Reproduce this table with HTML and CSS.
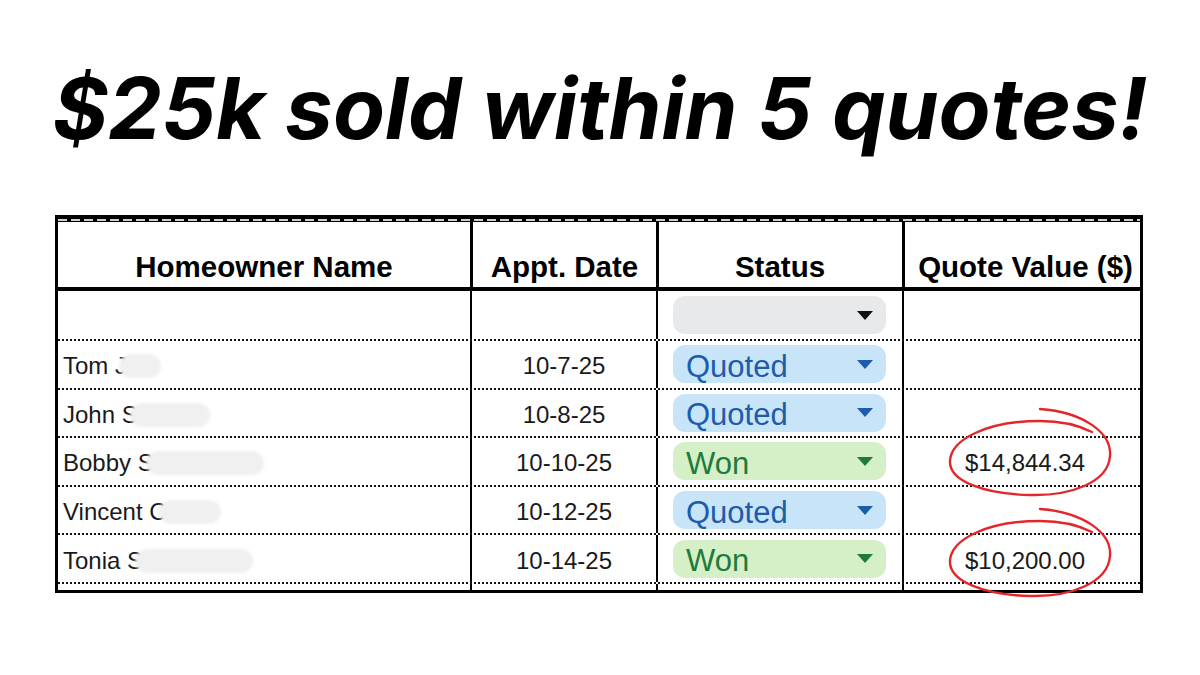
FILE: index.html
```html
<!DOCTYPE html>
<html>
<head>
<meta charset="utf-8">
<link rel="stylesheet" href="styles.css">
</head>
<body>
<div class="page">
  <h1 class="title">$25k sold within 5 quotes!</h1>
  <div class="sheet">
    <div class="band"></div>
    <div class="row head">
      <div class="cell c1">Homeowner Name</div>
      <div class="cell c2">Appt. Date</div>
      <div class="cell c3">Status</div>
      <div class="cell c4">Quote Value ($)</div>
    </div>
    <div class="row first">
      <div class="cell c1"></div>
      <div class="cell c2"></div>
      <div class="cell c3"><div class="pill empty"><span class="lbl"></span><span class="tri"></span></div></div>
      <div class="cell c4"></div>
    </div>
    <div class="row">
      <div class="cell c1 name">Tom J<span class="blob b1"></span></div>
      <div class="cell c2">10-7-25</div>
      <div class="cell c3"><div class="pill quoted"><span class="lbl">Quoted</span><span class="tri"></span></div></div>
      <div class="cell c4"></div>
    </div>
    <div class="row">
      <div class="cell c1 name">John S<span class="blob b2"></span></div>
      <div class="cell c2">10-8-25</div>
      <div class="cell c3"><div class="pill quoted"><span class="lbl">Quoted</span><span class="tri"></span></div></div>
      <div class="cell c4"></div>
    </div>
    <div class="row">
      <div class="cell c1 name">Bobby S<span class="blob b3"></span></div>
      <div class="cell c2">10-10-25</div>
      <div class="cell c3"><div class="pill won"><span class="lbl">Won</span><span class="tri"></span></div></div>
      <div class="cell c4">$14,844.34</div>
    </div>
    <div class="row">
      <div class="cell c1 name">Vincent C<span class="blob b4"></span></div>
      <div class="cell c2">10-12-25</div>
      <div class="cell c3"><div class="pill quoted"><span class="lbl">Quoted</span><span class="tri"></span></div></div>
      <div class="cell c4"></div>
    </div>
    <div class="row">
      <div class="cell c1 name">Tonia S<span class="blob b5"></span></div>
      <div class="cell c2">10-14-25</div>
      <div class="cell c3"><div class="pill won"><span class="lbl">Won</span><span class="tri"></span></div></div>
      <div class="cell c4">$10,200.00</div>
    </div>
    <div class="row tail">
      <div class="cell c1"></div>
      <div class="cell c2"></div>
      <div class="cell c3"></div>
      <div class="cell c4"></div>
    </div>
  </div>
  <svg class="marks" viewBox="0 0 1200 675" width="1200" height="675">
    <path d="M 1040 409 C 1082 412, 1112 432, 1110 456 C 1108 483, 1070 496, 1030 495 C 984 494, 949 481, 950 461 C 951 439, 988 421, 1040 421 C 1060 421, 1078 425, 1092 432" />
    <path transform="translate(0,100)" d="M 1040 409 C 1082 412, 1112 432, 1110 456 C 1108 483, 1070 497, 1030 496 C 984 495, 949 481, 950 461 C 951 439, 988 421, 1040 421 C 1060 421, 1078 425, 1092 432" />
  </svg>
</div>
</body>
</html>
```

FILE: styles.css
```css
html, body {
  margin: 0;
  padding: 0;
  background: #ffffff;
}

.page {
  position: relative;
  width: 1200px;
  height: 675px;
  overflow: hidden;
}

.title {
  margin: 0;
  padding-top: 66px;
  height: 86px;
  font-family: Inter, Roboto, "Liberation Sans", sans-serif;
  font-weight: 700;
  font-style: italic;
  font-size: 85px;
  line-height: 86px;
  text-align: center;
  color: #000;
  white-space: nowrap;
}

.sheet {
  margin: 63px 0 0 55px;
  width: 1088px;
  border-left: 3px solid #000;
  border-right: 3px solid #000;
  border-bottom: 3px solid #000;
  box-sizing: border-box;
  font-family: "Liberation Sans", Arial, sans-serif;
  color: #1a1a1a;
}

.band {
  height: 7px;
  background: #000;
  position: relative;
}
.band::after {
  content: "";
  position: absolute;
  left: 0;
  right: 0;
  top: 4px;
  height: 2px;
  background: repeating-linear-gradient(90deg, #cfcfcf 0 9px, #000 9px 13px);
}

.row {
  display: grid;
  grid-template-columns: 412px 186px 246px 238px;
  height: 48.6px;
  box-sizing: border-box;
  border-bottom: 2px dotted #111;
}

.row.head {
  height: 69px;
  border-bottom: 4px solid #000;
}
.row.first {
  height: 50px;
}
.row.tail {
  height: 6px;
  border-bottom: none;
}

.cell {
  display: flex;
  align-items: center;
  justify-content: center;
  font-size: 24px;
  padding-top: 4px;
  box-sizing: border-box;
  min-width: 0;
}
.c2, .c3, .c4 {
  border-left: 2px solid #000;
}

.head .cell {
  align-items: flex-end;
  padding-top: 0;
  padding-bottom: 5px;
  font-weight: 700;
  font-size: 29.5px;
  line-height: 30px;
  color: #000;
}
.head .c2, .head .c3, .head .c4 {
  border-left: 3px solid #000;
}

.cell.name {
  justify-content: flex-start;
  padding-left: 5px;
  white-space: nowrap;
}

.blob {
  display: inline-block;
  height: 24px;
  margin-left: -8px;
  border-radius: 12px;
  background: #f0f0f0;
  filter: blur(1.5px);
}
.b1 { width: 42px; }
.b2 { width: 80px; }
.b3 { width: 118px; }
.b4 { width: 62px; }
.b5 { width: 118px; }

.c3 {
  padding: 0 16px 0 15px;
}
.row .c3 {
  padding-top: 0;
}

.pill {
  width: 100%;
  height: 38px;
  border-radius: 12px;
  display: flex;
  align-items: center;
  justify-content: space-between;
  padding: 0 13px 0 13px;
  box-sizing: border-box;
  font-size: 31px;
  line-height: 31px;
}
.pill .lbl {
  padding-top: 4px;
}
.tri {
  width: 0;
  height: 0;
  border-left: 8px solid transparent;
  border-right: 8px solid transparent;
  border-top: 9px solid currentColor;
}

.pill.empty {
  background: #e8e9eb;
  color: #111;
}
.pill.quoted {
  background: #c8e4f8;
  color: #1b5cab;
}
.pill.won {
  background: #d5efc6;
  color: #1f7a3d;
}

.c4 {
  padding-left: 6px;
}

.marks {
  position: absolute;
  left: 0;
  top: 0;
  pointer-events: none;
}
.marks path {
  fill: none;
  stroke: #e3262a;
  stroke-width: 2.4;
  stroke-linecap: round;
}
```
